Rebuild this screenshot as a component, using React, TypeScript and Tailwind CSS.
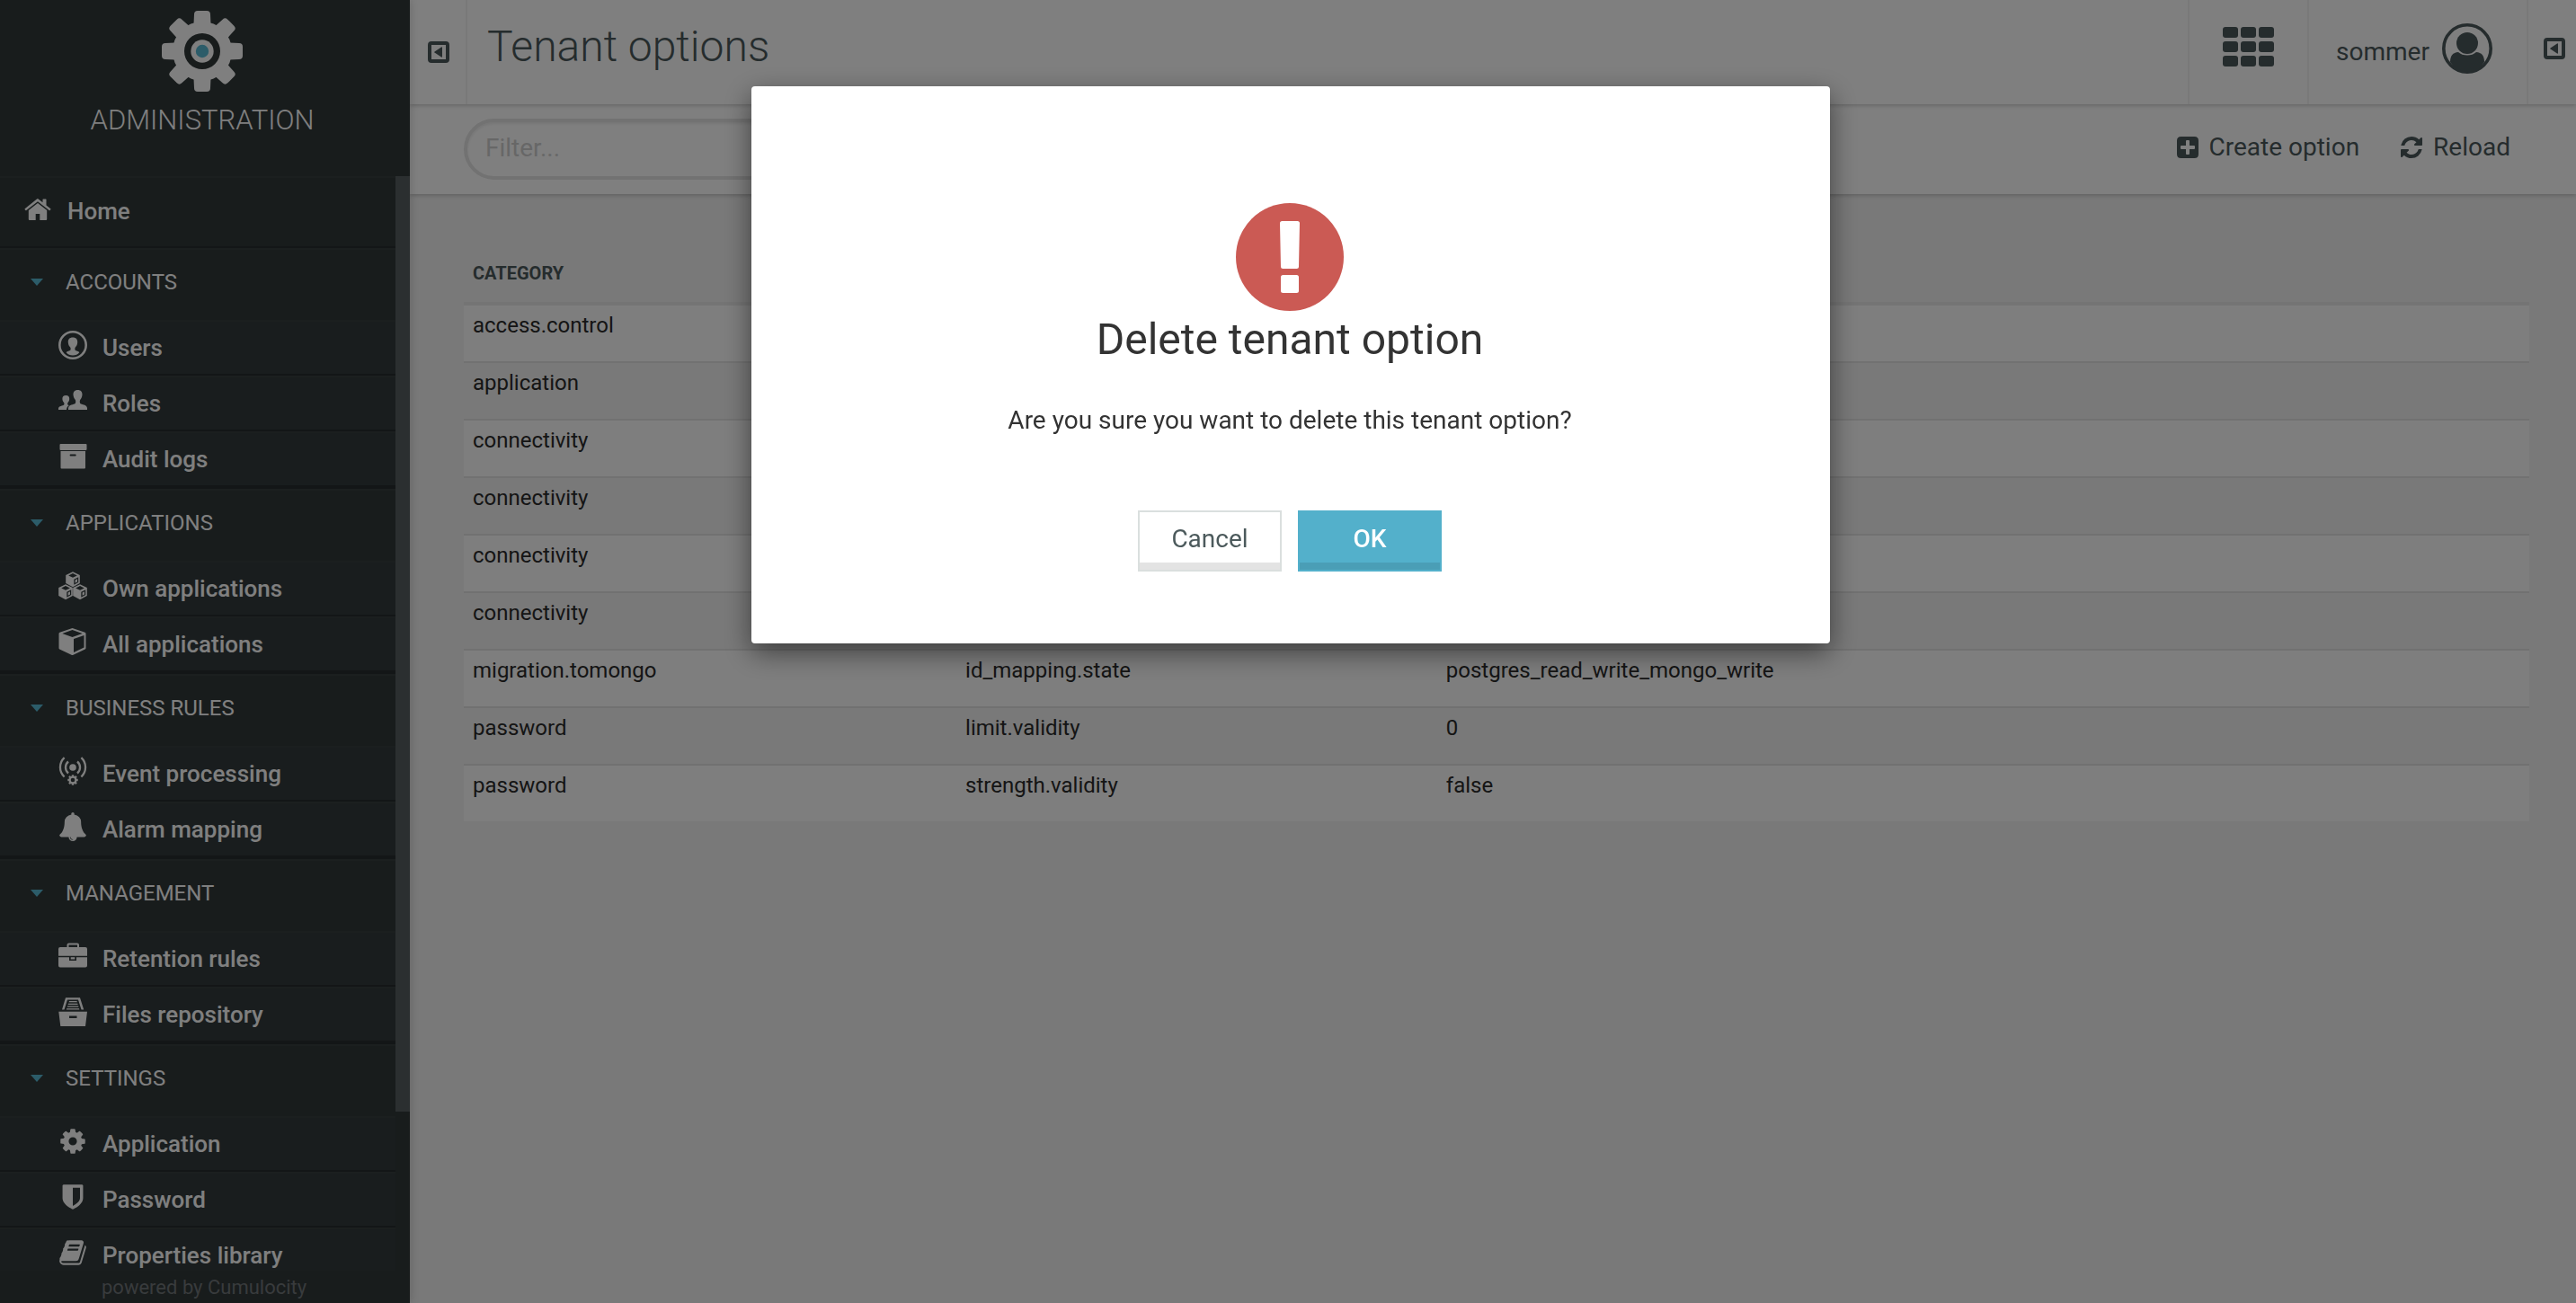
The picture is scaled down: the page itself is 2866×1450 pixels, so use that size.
import React from "react";

type IconProps = { className?: string };

const Svg = ({ box, className, children }: { box: string; className?: string; children: React.ReactNode }) => (
  <svg viewBox={box} className={className} fill="currentColor" aria-hidden="true">
    {children}
  </svg>
);

const HomeIcon = ({ className }: IconProps) => (
  <Svg box="0 0 30 24" className={className}>
    <path d="M15 0 20.500 4.200V1Q20.500.5 21 .5H24Q24.500.5 24.500 1V7.500L29.300 11.300Q29.700 11.700 29.300 12.200L28.500 13.100Q28.100 13.500 27.600 13.100L15 3.200 2.400 13.100Q1.900 13.500 1.500 13.100L.7 12.200Q.3 11.700.7 11.300L14 .6Q14.500.1 15 0Z" />
    <path d="M15 5 25.200 13V23Q25.200 24 24.200 24H17.300V17H12.700V24H5.800Q4.800 24 4.800 23V13Z" />
  </Svg>
);

const UserIcon = ({ className }: IconProps) => (
  <Svg box="0 0 32 32" className={className}>
    <circle cx="16" cy="16" r="14.700" fill="none" stroke="currentColor" strokeWidth="2.600" />
    <path d="M16 7.600C19.600 7.600 21.400 9.800 21.200 13 21 16 19.900 17.400 18.800 18.500 18.200 19.200 18.300 21 18.700 21.800 19.500 22.700 22.600 22.500 23.300 24.300 21.500 26.600 19 27.600 16 27.600S10.500 26.600 8.700 24.300C9.400 22.500 12.500 22.700 13.300 21.800 13.700 21 13.800 19.200 13.200 18.500 12.100 17.400 11 16 10.800 13 10.600 9.800 12.400 7.600 16 7.600Z" />
  </Svg>
);

const RolesIcon = ({ className }: IconProps) => (
  <Svg box="0 0 32 32" className={className}>
    <path d="M21.500 4C25 4 26.700 6.200 26.500 9.300 26.300 12 25.400 13.300 24.300 14.800 23.600 15.900 23.600 18 24.300 19 25.700 20.400 31.500 20 32 24V26H11V24C11.500 20 17.300 20.400 18.700 19 19.400 18 19.400 15.900 18.700 14.800 17.600 13.300 16.700 12 16.500 9.300 16.300 6.200 18 4 21.500 4Z" />
    <path d="M8.300 10C11 10 12.300 11.500 12.200 14 12 16.200 11.300 17 10.500 18 10 18.900 10 19.900 10.500 20.600L11.800 21.300C9.800 22.300 9.200 23.800 9 26H0V24.500C.4 21.700 4.800 22 6.100 20.600 6.600 19.900 6.600 18.900 6.100 18 5.300 17 4.600 16.200 4.400 14 4.300 11.500 5.600 10 8.300 10Z" />
  </Svg>
);

const ArchiveIcon = ({ className }: IconProps) => (
  <Svg box="0 0 32 32" className={className}>
    <rect x="1.500" y="2" width="30" height="7" rx="1" />
    <path fillRule="evenodd" d="M2.500 10H30V28.500Q30 29.500 29 29.500H3.500Q2.500 29.500 2.500 28.500ZM13.500 13.500Q12.600 13.500 12.600 14.500T13.500 15.500H18.800Q19.700 15.500 19.700 14.500T18.800 13.500Z" />
  </Svg>
);

const CubesIcon = ({ className }: IconProps) => (
  <Svg box="0 0 32 32" className={className}>
    {["translate(8 0)", "translate(0 14)", "translate(16 14)"].map((t) => (
      <g key={t} transform={t}>
        <path fillRule="evenodd" d="M8 .3 15.800 4V13L8 17.300.2 13V4ZM8 1.900 3.200 4.400 8 6.700 12.800 4.400ZM9.300 8.700V14.700L14.200 12.100V6.200Z" />
        <path d="M10.600 9.500 13 8.300V11.400L10.600 12.700Z" />
      </g>
    ))}
  </Svg>
);

const CubeIcon = ({ className }: IconProps) => (
  <Svg box="0 0 32 32" className={className}>
    <path fillRule="evenodd" d="M15.500 1 29.500 5.800Q30.500 6.200 30.500 7.200V23.200Q30.500 24 29.700 24.500L16.500 30.700Q15.500 31.100 14.500 30.700L1.300 24.500Q.5 24 .5 23.200V7.200Q.5 6.200 1.500 5.800ZM15.500 3 4.300 6.900 15.500 11 26.700 6.900ZM17 13V28L28.500 22.500V8.900Z" />
  </Svg>
);

const EventIcon = ({ className }: IconProps) => (
  <Svg box="0 0 32 32" className={className}>
    <circle cx="16" cy="12" r="3.800" />
    <g fill="none" stroke="currentColor" strokeWidth="2.300">
      <path d="M11 5.500A8.500 8.500 0 0 0 11 18.500M21 5.500A8.500 8.500 0 0 1 21 18.500" />
      <path d="M6.600 1.200A14.500 14.500 0 0 0 6.600 22.500M25.400 1.200A14.500 14.500 0 0 1 25.400 22.500" />
      <circle cx="16" cy="26" r="3.400" strokeWidth="2.200" />
    </g>
    {[0, 45, 90, 135, 180, 225, 270, 315].map((a) => (
      <rect key={a} x="14.800" y="20.300" width="2.400" height="2.400" transform={`rotate(${a} 16 26)`} />
    ))}
  </Svg>
);

const BellIcon = ({ className }: IconProps) => (
  <Svg box="0 0 1792 1792" className={className}>
    <path d="M912 1696q0-16-16-16-59 0-101.500-42.500t-42.500-101.500q0-16-16-16t-16 16q0 73 51.500 124.500t124.500 51.500q16 0 16-16zm816-288q0 52-38 90t-90 38h-448q0 106-75 181t-181 75-181-75-75-181h-448q-52 0-90-38t-38-90q50-42 91-88t85-119.500 74.500-158.500 50-206 19.500-260q0-152 117-282.500t307-158.500q-8-19-8-39 0-40 28-68t68-28 68 28 28 68q0 20-8 39 190 28 307 158.500t117 282.500q0 139 19.500 260t50 206 74.500 158.500 85 119.500 91 88z" />
  </Svg>
);

const BriefcaseIcon = ({ className }: IconProps) => (
  <Svg box="0 0 32 32" className={className}>
    <path fillRule="evenodd" d="M9.500 6V3.500Q9.500 1.500 11.500 1.500H21Q23 1.500 23 3.500V6H30Q32 6 32 8V15.700H0V8Q0 6 2 6ZM11.500 6H21V3.500H11.500Z" />
    <path d="M0 17.200H12V21H20V17.200H32V26.500Q32 28.500 30 28.500H2Q0 28.500 0 26.500Z" />
    <rect x="13.700" y="17.200" width="4.600" height="2.300" />
  </Svg>
);

const FilesIcon = ({ className }: IconProps) => (
  <Svg box="0 0 32 32" className={className}>
    <path d="M4 13.500 8 .3H24L28.200 13.500H25.500L22 2.600H10L6.500 13.500Z" />
    <path d="M12 4H20.500L20.900 5.300H11.600ZM11 6.800H21.300L21.700 8.100H10.600ZM10.200 9.500H22.100L22.500 10.800H9.800ZM9.200 12.200H23L23.300 13.500H8.800Z" />
    <path fillRule="evenodd" d="M.3 15.800H32L30 32H2.300ZM12 20.500V23H20.500V20.500Z" />
  </Svg>
);

const CogIcon = ({ className }: IconProps) => (
  <Svg box="0 0 1792 1792" className={className}>
    <path d="M1152 896q0-106-75-181t-181-75-181 75-75 181 75 181 181 75 181-75 75-181zm512-109v222q0 12-8 23t-20 13l-185 28q-19 54-39 91 35 50 107 138 10 12 10 25t-9 23q-27 37-99 108t-94 71q-12 0-26-9l-138-108q-44 23-91 38-16 136-29 186-7 28-36 28h-222q-14 0-24.500-8.500t-11.500-21.500l-28-184q-49-16-90-37l-141 107q-10 9-25 9-14 0-25-11-126-114-165-168-7-10-7-23 0-12 8-23 15-21 51-66.500t54-70.500q-27-50-41-99l-183-27q-13-2-21-12.500t-8-23.500v-222q0-12 8-23t19-13l186-28q14-46 39-92-40-57-107-138-10-12-10-24 0-10 9-23 26-36 98.500-107.500t94.500-71.500q13 0 26 10l138 107q44-23 91-38 16-136 29-186 7-28 36-28h222q14 0 24.500 8.500t11.500 21.500l28 184q49 16 90 37l142-107q9-9 24-9 13 0 25 10 129 119 165 170 7 8 7 22 0 12-8 23-15 21-51 66.500t-54 70.500q26 50 41 98l183 28q13 2 21 12.500t8 23.500z" />
  </Svg>
);

const ShieldIcon = ({ className }: IconProps) => (
  <Svg box="0 0 1792 1792" className={className}>
    <path d="M1344 960v-640h-448v1137q119-63 213-137 235-184 235-360zm192-768v768q0 86-33.500 170.500t-83 150-118 127.500-126.500 103-121 77.500-89.500 49.500-42.500 20q-12 6-26 6t-26-6q-16-7-42.500-20t-89.500-49.500-121-77.500-126.500-103-118-127.500-83-150-33.500-170.500v-768q0-26 19-45t45-19h1152q26 0 45 19t19 45z" />
  </Svg>
);

const BookIcon = ({ className }: IconProps) => (
  <Svg box="0 0 1792 1792" className={className}>
    <path d="M1703 478q40 57 18 129l-275 906q-19 64-76.500 107.500t-122.500 43.500h-923q-77 0-148.500-53.500t-99.500-131.500q-24-67-2-127 0-4 3-27t4-37q1-8-3-21.500t-3-19.500q2-11 8-21t16.500-23.500 16.500-23.500q23-38 45-91.500t30-91.500q3-10 .5-30t-.5-28q3-11 17-28t17-23q21-36 42-92t25-90q1-9-2.500-32t.5-28q4-13 22-30.500t22-22.500q19-26 42.500-84.500t27.500-96.500q1-8-3-25.500t-2-26.500q2-8 9-18t18-23 17-21q8-12 16.500-30.500t15-35 16-36 19.500-32 26.500-23.500 36-11.500 47.500 5.500l-1 3q38-9 51-9h761q74 0 114 56t18 130l-274 906q-36 119-71.500 153.500t-128.500 34.500h-869q-27 0-38 15-11 16-1 43 24 70 144 70h923q29 0 56-15.500t35-41.500l300-987q7-22 5-57 38 15 59 43zm-1064 2q-4 13 2 22.500t20 9.500h608q13 0 25.500-9.500t16.500-22.500l21-64q4-13-2-22.500t-20-9.500h-608q-13 0-25.500 9.500t-16.500 22.500zm-83 256q-4 13 2 22.500t20 9.500h608q13 0 25.500-9.500t16.500-22.500l21-64q4-13-2-22.500t-20-9.500h-608q-13 0-25.500 9.500t-16.500 22.500z" />
  </Svg>
);

const ReloadIcon = ({ className }: IconProps) => (
  <Svg box="128 128 1536 1536" className={className}>
    <path d="M1639 1056q0 5-1 7-64 268-268 434.500t-478 166.500q-146 0-282.500-55t-243.500-157l-129 129q-19 19-45 19t-45-19-19-45v-448q0-26 19-45t45-19h448q26 0 45 19t19 45-19 45l-137 137q71 66 161 102t187 36q134 0 250-65t186-179q11-17 53-117 8-23 30-23h192q13 0 22.500 9.500t9.500 22.500zm25-800v448q0 26-19 45t-45 19h-448q-26 0-45-19t-19-45 19-45l138-138q-148-137-349-137-134 0-250 65t-186 179q-11 17-53 117-8 23-30 23h-199q-13 0-22.500-9.500t-9.500-22.500v-7q65-268 270-434.500t480-166.500q146 0 284 55.500t245 156.500l130-129q19-19 45-19t45 19 19 45z" />
  </Svg>
);

const PlusSquareIcon = ({ className }: IconProps) => (
  <Svg box="0 0 24 24" className={className}>
    <path fillRule="evenodd" d="M4.500 0H19.500Q24 0 24 4.500V19.500Q24 24 19.500 24H4.500Q0 24 0 19.500V4.500Q0 0 4.500 0ZM11 4Q10 4 10 5V10H5Q4 10 4 11V13Q4 14 5 14H10V19Q10 20 11 20H13Q14 20 14 19V14H19Q20 14 20 13V11Q20 10 19 10H14V5Q14 4 13 4Z" />
  </Svg>
);

const CollapseIcon = ({ className }: IconProps) => (
  <Svg box="0 0 24 24" className={className}>
    <path fillRule="evenodd" d="M4 0H20Q24 0 24 4V20Q24 24 20 24H4Q0 24 0 20V4Q0 0 4 0ZM4 4V20H20V4Z" />
    <path d="M15 6.500Q16 6 16 7V17Q16 18 15 17.500L7.500 12.600Q7 12 7.500 11.400Z" />
  </Svg>
);

const GridIcon = ({ className }: IconProps) => (
  <Svg box="0 0 57 44" className={className}>
    {[0, 16, 32].map((y) => [0, 20, 40].map((x) => <rect key={`${x}-${y}`} x={x} y={y} width="17" height="12" rx="3" />))}
  </Svg>
);

const AvatarIcon = ({ className }: IconProps) => (
  <Svg box="0 0 56 56" className={className}>
    <circle cx="28" cy="28" r="26.200" fill="none" stroke="currentColor" strokeWidth="3.600" />
    <circle cx="28" cy="22" r="12" />
    <path d="M9 43C9 36 12 32.500 18 32Q22 35.500 28 35.500T38 32C44 32.500 47 36 47 43Q39.500 55 28 55T9 43Z" />
  </Svg>
);

const LogoIcon = ({ className }: IconProps) => (
  <Svg box="-45 -45 90 90" className={className}>
    {[0, 45, 90, 135, 180, 225, 270, 315].map((a) => (
      <path key={a} d="M-5-45H5Q9-45 9-41L9.500-30H-9.500L-9-41Q-9-45-5-45Z" transform={`rotate(${a})`} />
    ))}
    <path fillRule="evenodd" d="M0-33A33 33 0 1 1 0 33A33 33 0 1 1 0-33ZM0-20A20 20 0 1 0 0 20A20 20 0 1 0 0-20Z" />
    <circle r="12.700" />
    <circle r="7.200" className="fill-[#58b8d2]" />
  </Svg>
);

const AlertIcon = ({ className }: IconProps) => (
  <Svg box="0 0 120 120" className={className}>
    <circle cx="60" cy="60" r="60" />
    <g fill="#fff">
      <path d="M51.500 20H68.500Q71 20 71 22.500L70 70.500Q70 73 67.500 73H52.500Q50 73 50 70.500L49 22.500Q49 20 51.500 20Z" />
      <rect x="50" y="80" width="20" height="20" rx="2.500" />
    </g>
  </Svg>
);

type Entry = { label: string; icon: (p: IconProps) => React.ReactElement };

const sections: { title: string; entries: Entry[] }[] = [
  {
    title: "ACCOUNTS",
    entries: [
      { label: "Users", icon: UserIcon },
      { label: "Roles", icon: RolesIcon },
      { label: "Audit logs", icon: ArchiveIcon },
    ],
  },
  {
    title: "APPLICATIONS",
    entries: [
      { label: "Own applications", icon: CubesIcon },
      { label: "All applications", icon: CubeIcon },
    ],
  },
  {
    title: "BUSINESS RULES",
    entries: [
      { label: "Event processing", icon: EventIcon },
      { label: "Alarm mapping", icon: BellIcon },
    ],
  },
  {
    title: "MANAGEMENT",
    entries: [
      { label: "Retention rules", icon: BriefcaseIcon },
      { label: "Files repository", icon: FilesIcon },
    ],
  },
  {
    title: "SETTINGS",
    entries: [
      { label: "Application", icon: CogIcon },
      { label: "Password", icon: ShieldIcon },
      { label: "Properties library", icon: BookIcon },
    ],
  },
];

const options: [string, string, string][] = [
  ["access.control", "", ""],
  ["application", "", ""],
  ["connectivity", "", ""],
  ["connectivity", "", ""],
  ["connectivity", "", ""],
  ["connectivity", "", ""],
  ["migration.tomongo", "id_mapping.state", "postgres_read_write_mongo_write"],
  ["password", "limit.validity", "0"],
  ["password", "strength.validity", "false"],
];

function Sidebar() {
  return (
    <aside className="relative z-10 flex w-[456px] shrink-0 flex-col bg-[#303839] text-white shadow-[0_0_10px_rgba(0,0,0,0.2)]">
      <div className="flex h-[196px] shrink-0 flex-col items-center pt-3 pr-1.5">
        <LogoIcon className="size-[90px]" />
        <h2 className="mt-3 text-[31px] leading-10 font-light">ADMINISTRATION</h2>
      </div>
      <div className="flex min-h-0 flex-1">
        <nav className="min-w-0 flex-1 overflow-hidden">
          <a href="#home" className="flex h-20 items-center gap-[18px] border-t-2 border-b-2 border-t-[#363e3f] border-b-[#262d2e] pb-0.5 pl-[27px] text-[26px] font-medium">
            <HomeIcon className="mb-1 h-6 w-[30px]" />
            Home
          </a>
          {sections.map((section) => (
            <section key={section.title} className="border-b-2 border-[#262d2e]">
              <button type="button" className="flex h-20 w-full items-center gap-[25px] border-t-2 border-[#363e3f] pb-1.5 pl-[34px] text-left text-[24px] text-white">
                <svg viewBox="0 0 14 8" className="h-2 w-3.5 fill-[#58b8d2]" aria-hidden="true">
                  <path d="M0 0H14L7 8Z" />
                </svg>
                {section.title}
              </button>
              <ul className="bg-[#333b3c]">
                {section.entries.map(({ label, icon: Icon }) => (
                  <li key={label}>
                    <a href={`#${label}`} className="flex h-[62px] items-center gap-[17px] border-t-2 border-b-2 border-t-[#363e3f] border-b-[#262d2e] pl-[65px] text-[26px] font-medium">
                      <Icon className="mb-1.5 size-8" />
                      {label}
                    </a>
                  </li>
                ))}
              </ul>
            </section>
          ))}
        </nav>
        <div className="w-4 shrink-0">
          <div className="h-[85.500%] bg-[#575e60]" />
        </div>
      </div>
      <footer className="h-9 shrink-0 pl-[113px] text-[22px] leading-[38px] text-[#70777a]">powered by Cumulocity</footer>
    </aside>
  );
}

function TopBar() {
  return (
    <header className="relative z-[2] flex h-[116px] items-stretch bg-white shadow-[0_1px_5px_rgba(0,0,0,0.25)]">
      <button type="button" aria-label="Toggle navigation" className="flex w-16 items-center border-r-2 border-[#f2f2f2] pl-5">
        <CollapseIcon className="size-6" />
      </button>
      <h1 className="flex-1 pt-4 pl-[22px] text-[48px] leading-[72px] font-light">Tenant options</h1>
      <button type="button" aria-label="Applications" className="flex w-[133px] justify-center border-l-2 border-[#f2f2f2] pt-[30px]">
        <GridIcon className="h-11 w-[57px]" />
      </button>
      <button type="button" className="flex w-[244px] items-start gap-3.5 border-l-2 border-[#f2f2f2] pt-[26px] pl-[30px]">
        <span className="w-[104px] text-[28px] leading-[64px]">sommer</span>
        <AvatarIcon className="size-14 shrink-0" />
      </button>
      <button type="button" aria-label="Toggle details" className="flex w-[55px] justify-start border-l-2 border-[#f2f2f2] pt-[42px] pl-[17px]">
        <CollapseIcon className="size-6" />
      </button>
    </header>
  );
}

function ActionBar() {
  return (
    <div className="relative z-[1] flex h-[100px] items-center justify-between bg-white pr-[73px] pl-[60px] shadow-[0_1px_5px_rgba(0,0,0,0.25)]">
      <input
        type="text"
        aria-label="Filter"
        placeholder="Filter..."
        className="h-[68px] w-[520px] rounded-full border-4 border-[#e4e4e4] bg-white px-5 pb-1 text-[28px] shadow-[inset_0_2px_3px_rgba(0,0,0,0.08)] placeholder:text-[#cfcfcf]"
      />
      <div className="flex gap-[46px] pb-1 text-[28px]">
        <button type="button" className="flex items-center gap-3">
          <PlusSquareIcon className="size-6" />
          Create option
        </button>
        <button type="button" className="flex items-center gap-3">
          <ReloadIcon className="size-6" />
          Reload
        </button>
      </div>
    </div>
  );
}

function OptionsTable() {
  return (
    <table className="w-full table-fixed border-separate border-spacing-0 text-left">
      <colgroup>
        <col className="w-[23.850%]" />
        <col className="w-[23.270%]" />
        <col />
      </colgroup>
      <thead>
        <tr className="h-[60px] text-[20px] leading-6">
          <th scope="col" className="border-b-4 border-[#e9e9e9] px-2.5 pt-3 align-top font-bold">CATEGORY</th>
          <th scope="col" aria-label="Key" className="border-b-4 border-[#e9e9e9]" />
          <th scope="col" aria-label="Value" className="border-b-4 border-[#e9e9e9]" />
        </tr>
      </thead>
      <tbody className="text-[24px] leading-8 text-[#2a2a2a]">
        {options.map((row, r) => (
          <tr key={r} className="group h-16 odd:bg-[#fcfcfc] last:h-[62px]">
            {row.map((cell, c) => (
              <td key={c} className="border-b-2 border-[#e3e3e3] px-2.5 pt-1.5 align-top group-last:border-b-0">{cell}</td>
            ))}
          </tr>
        ))}
      </tbody>
    </table>
  );
}

function DeleteDialog() {
  return (
    <div className="fixed inset-0 z-50 flex items-start justify-center bg-black/50 pt-24 pl-1.5">
      <div
        role="dialog"
        aria-modal="true"
        aria-labelledby="dialog-title"
        className="flex w-[1200px] flex-col items-center rounded bg-white pt-[130px] pr-0.5 pb-20 text-[#333] shadow-[0_10px_30px_rgba(0,0,0,0.5)]"
      >
        <AlertIcon className="size-[120px] text-[#cb5a54]" />
        <h2 id="dialog-title" className="text-[48px] leading-[64px]">Delete tenant option</h2>
        <p className="mt-[38px] text-[28px] leading-10">Are you sure you want to delete this tenant option?</p>
        <div className="mt-20 flex gap-[18px] text-[28px]">
          <button type="button" className="h-[68px] w-40 border-2 border-[#dadfde] bg-white pb-1 text-[#4c5a5c] shadow-[inset_0_-8px_0_#e3e3e3]">Cancel</button>
          <button type="button" className="h-[68px] w-40 border-2 border-[#53b0cb] bg-[#53b0cb] pb-1 font-medium text-white shadow-[inset_0_-8px_0_#4a9eb6]">OK</button>
        </div>
      </div>
    </div>
  );
}

export default function App() {
  return (
    <div className="flex h-screen overflow-hidden bg-[#f2f2f2] font-['Roboto','Liberation_Sans',sans-serif] text-[#4b585b]">
      <Sidebar />
      <div className="flex min-w-0 flex-1 flex-col">
        <TopBar />
        <ActionBar />
        <main className="flex-1 pt-16 pr-[52px] pl-[60px]">
          <OptionsTable />
        </main>
      </div>
      <DeleteDialog />
    </div>
  );
}
